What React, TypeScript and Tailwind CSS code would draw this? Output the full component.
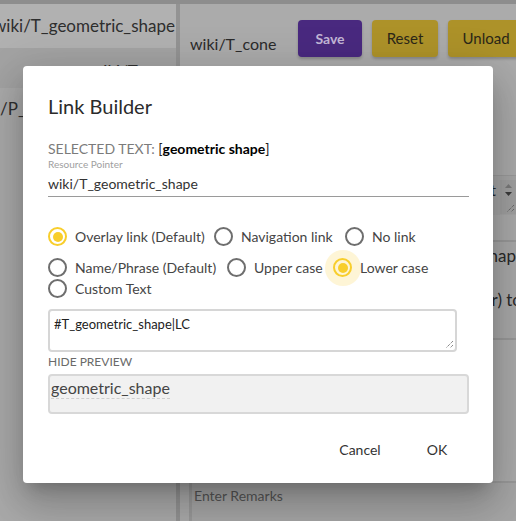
import React from "react";

function Radio({
  checked = false,
  halo = false,
  label,
  w,
}: {
  checked?: boolean;
  halo?: boolean;
  label: string;
  w: string;
}) {
  return (
    <div className={`flex items-center h-[21px] ${w}`}>
      <span className="relative w-[19px] h-[19px] shrink-0">
        {halo && (
          <span className="absolute left-[-8.5px] top-[-8.5px] w-[36px] h-[36px] rounded-full bg-[#fef5d6]" />
        )}
        <span
          className={`absolute inset-0 rounded-full border-2 ${
            checked ? "border-[#f8ce2c]" : "border-[#6e6e6e]"
          }`}
        />
        {checked && (
          <span className="absolute left-[4.5px] top-[4.5px] w-[10px] h-[10px] rounded-full bg-[#f8ce2c]" />
        )}
      </span>
      <span className="relative ml-[8px] text-[14px] leading-[20px] text-[#454545] whitespace-nowrap">
        {label}
      </span>
    </div>
  );
}

function ResizeHandle({ cls }: { cls: string }) {
  return (
    <svg className={cls} width="10" height="10" viewBox="0 0 10 10">
      <line x1="9" y1="2" x2="2" y2="9" stroke="#555" strokeWidth="1" strokeDasharray="1 1" />
      <line x1="9" y1="6" x2="6" y2="9" stroke="#555" strokeWidth="1" strokeDasharray="1 1" />
    </svg>
  );
}

export default function App() {
  return (
    <div className="relative w-[516px] h-[521px] overflow-hidden bg-[#a8a8a8] font-['Lato',sans-serif]">
      {/* background page (dimmed) */}
      <div className="h-[4px] bg-[#8d8d8d]" />
      <div className="flex h-[517px]">
        <div className="w-[176px] shrink-0 flex flex-col overflow-hidden">
          <div className="h-[44px] bg-[#b1b1b1] flex items-center">
            <span className="ml-[-7px] text-[17px] text-[#2e2e2e] whitespace-nowrap">
              wiki/T_geometric_shape
            </span>
          </div>
          <div className="h-[40px] bg-[#a3a3a3] pl-[90px] pt-[12px]">
            <span className="text-[17px] leading-[24px] text-[#2e2e2e] whitespace-nowrap">
              wiki/T
            </span>
          </div>
          <div className="flex-1 bg-[#aaaaaa] pt-[9px]">
            <span className="text-[17px] leading-[24px] text-[#2e2e2e] whitespace-nowrap">
              /P_
            </span>
          </div>
        </div>
        <div className="w-[4px] shrink-0 bg-[#939393]" />
        <div className="flex-1 min-w-0 flex flex-col bg-[#ababab] overflow-hidden">
          <div className="flex items-start pl-[10px] pt-[16px] h-[54px]">
            <span className="w-[108px] shrink-0 mt-[12px] text-[16px] leading-[24px] text-[#2a2a2a] whitespace-nowrap">
              wiki/T_cone
            </span>
            <div className="w-[64px] h-[37px] shrink-0 rounded-[4px] bg-[#49297f] flex items-center justify-center text-[14px] font-bold text-[#c2b6d6] shadow-[0_2px_3px_rgba(0,0,0,0.2)]">
              Save
            </div>
            <div className="ml-[10px] w-[66px] h-[37px] shrink-0 rounded-[4px] bg-[#ad9229] flex items-center justify-center text-[15px] text-[#2b2718] shadow-[0_2px_3px_rgba(0,0,0,0.2)]">
              Reset
            </div>
            <div className="ml-[10px] w-[76px] h-[37px] shrink-0 rounded-[4px] bg-[#ad9229] flex items-center justify-center text-[15px] text-[#2b2718] shadow-[0_2px_3px_rgba(0,0,0,0.2)]">
              Unload
            </div>
          </div>
          <div className="h-[117px]" />
          <div className="h-[40px] border-t border-[#9b9b9b] bg-[#a6a6a6] flex justify-end items-start pt-[4px]">
            <span className="text-[16px] leading-[20px] text-[#2a2a2a] whitespace-nowrap">t</span>
            <div className="relative ml-[4px] w-[16px] h-[34px] bg-[#a1a1a1]">
              <svg className="absolute left-[4px] top-[3px]" width="9" height="14" viewBox="0 0 9 14">
                <path d="M1 5 L4.5 1 L8 5 Z" fill="#7a7a7a" />
                <path d="M1 9 L4.5 13 L8 9 Z" fill="#3a3a3a" />
              </svg>
              <ResizeHandle cls="absolute right-[1px] bottom-[1px]" />
            </div>
          </div>
          <div className="h-[25px]" />
          <div className="h-[100px] border-t-2 border-b-2 border-[#999999] bg-[#a9a9a9] flex flex-col items-end pt-[2px]">
            <span className="mr-[-9px] text-[17px] leading-[24px] text-[#2a2a2a] whitespace-nowrap">
              hape
            </span>
            <span className="mt-[20px] mr-[-6px] text-[17px] leading-[24px] text-[#2a2a2a] whitespace-nowrap">
              r) to
            </span>
          </div>
          <div className="flex-1" />
          <div className="ml-[9px] h-[40px] border-l-[3px] border-t-2 border-[#999999] bg-[#a6a6a6] relative pl-[2px]">
            <span className="text-[14px] leading-[20px] text-[#555555]">Enter Remarks</span>
          </div>
        </div>
      </div>

      {/* modal */}
      <div className="absolute left-[23px] top-[66px] w-[470px] h-[417px] rounded-[4px] bg-white shadow-[0_11px_15px_-7px_rgba(0,0,0,0.2),0_24px_38px_3px_rgba(0,0,0,0.14),0_9px_46px_8px_rgba(0,0,0,0.12)] flex flex-col pl-[25px] pt-[26px]">
        <div className="h-[28px] leading-[28px] text-[20px] text-[#2b2b2b]">Link Builder</div>
        <div className="mt-[20px] h-[18px] leading-[18px] text-[14px] text-[#7b7b7b] whitespace-nowrap">
          SELECTED TEXT: <span className="text-[#222222]">[</span>
          <span className="font-bold text-black">geometric shape</span>
          <span className="text-[#222222]">]</span>
        </div>
        <div className="h-[12px] leading-[12px] text-[10px] text-[#a0a0a0]">Resource Pointer</div>
        <div className="w-[421px] border-b border-[#9a9a9a] pt-[4px] pb-[2px] text-[14px] leading-[20px] text-[#333333]">
          wiki/T_geometric_shape
        </div>

        <div className="mt-[29px] w-[421px] flex flex-wrap">
          <Radio checked label="Overlay link (Default)" w="w-[166px]" />
          <Radio label="Navigation link" w="w-[131px]" />
          <Radio label="No link" w="w-[100px]" />
        </div>
        <div className="mt-[10px] w-[421px] flex flex-wrap">
          <Radio label="Name/Phrase (Default)" w="w-[179px]" />
          <Radio label="Upper case" w="w-[106px]" />
          <Radio checked halo label="Lower case" w="w-[110px]" />
          <Radio label="Custom Text" w="w-[120px]" />
        </div>

        <div className="relative mt-[10px] w-[409px] h-[43px] border-2 border-[#d6d6d6] rounded-[4px] pl-[4px] pt-[5px] text-[13px] leading-[16px] text-[#222222]">
          #T_geometric_shape|LC
          <ResizeHandle cls="absolute right-[1px] bottom-[1px]" />
        </div>
        <div className="mt-[2px] h-[16px] leading-[16px] text-[12px] text-[#6a6a6a]">HIDE PREVIEW</div>
        <div className="mt-[4px] w-[421px] h-[40px] bg-[#f1f1f1] border-2 border-[#d8d8d8] rounded-[4px] pl-[1px]">
          <span className="inline-block text-[16px] leading-[20px] text-[#444444] border-b border-dashed border-[#cfcfcf]">
            geometric_shape
          </span>
        </div>

        <div className="mt-auto flex justify-end gap-[13px] pr-[24px] pb-[16px]">
          <div className="w-[64px] h-[36px] flex items-center justify-center text-[14px] text-[#333333]">Cancel</div>
          <div className="w-[64px] h-[36px] flex items-center justify-center text-[14px] text-[#333333]">OK</div>
        </div>
      </div>
    </div>
  );
}
